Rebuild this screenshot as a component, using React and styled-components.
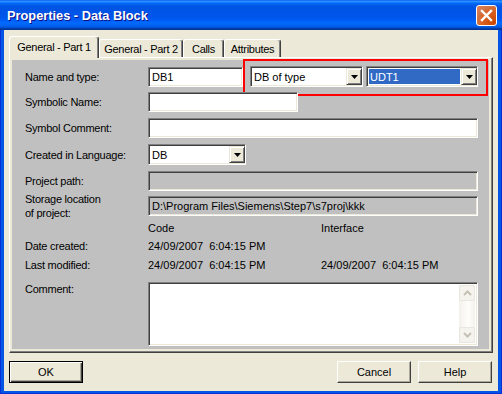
import React from "react";
import styled, { createGlobalStyle } from "styled-components";

const GlobalStyle = createGlobalStyle`
  html, body { margin: 0; padding: 0; background: #fff; }
  body { font-family: "Liberation Sans", Arial, sans-serif; font-size: 11px; color: #000; }
`;

export default function App() {
  return (
    <>
      <GlobalStyle />
      <Window>
        <TitleBar>
          <Title>Properties - Data Block</Title>
          <CloseButton>
            <svg width="21" height="21" viewBox="0 0 21 21">
              <path d="M6 6 L15 15 M15 6 L6 15" stroke="#fff" strokeWidth="2.4" strokeLinecap="square" />
            </svg>
          </CloseButton>
        </TitleBar>

        <Client>
          <TabStrip>
            <Tab $w={90} $active>General - Part 1</Tab>
            <Tab $w={84}>General - Part 2</Tab>
            <Tab $w={41}>Calls</Tab>
            <Tab $w={57}>Attributes</Tab>
          </TabStrip>

          <Panel>
            <Page>
              <Row $h={21} $mt={6}>
                <Label>Name and type:</Label>
                <Field $w={95}>DB1</Field>
                <Highlight>
                  <Combo $w={113} value="DB of type" />
                  <Combo $w={112} value="UDT1" selected />
                </Highlight>
              </Row>

              <Row $h={20} $mt={5}>
                <Label>Symbolic Name:</Label>
                <Field $w={150} />
              </Row>

              <Row $h={20} $mt={6}>
                <Label>Symbol Comment:</Label>
                <Field $w={330} />
              </Row>

              <Row $h={21} $mt={6}>
                <Label>Created in Language:</Label>
                <Combo $w={98} value="DB" />
              </Row>

              <Row $h={20} $mt={6}>
                <Label>Project path:</Label>
                <Field $w={330} $disabled />
              </Row>

              <Row $h={20} $mt={5}>
                <Label>Storage location<br />of project:</Label>
                <Field $w={330} $disabled>{"D:\\Program Files\\Siemens\\Step7\\s7proj\\kkk"}</Field>
              </Row>

              <Row $h={14} $mt={5}>
                <Label />
                <Values>
                  <span>Code</span>
                  <span>Interface</span>
                </Values>
              </Row>

              <Row $h={14} $mt={4}>
                <Label>Date created:</Label>
                <Values>
                  <span>24/09/2007  6:04:15 PM</span>
                  <span />
                </Values>
              </Row>

              <Row $h={14} $mt={5}>
                <Label>Last modified:</Label>
                <Values>
                  <span>24/09/2007  6:04:15 PM</span>
                  <span>24/09/2007  6:04:15 PM</span>
                </Values>
              </Row>

              <Row $h={64} $mt={10} $top>
                <Label>Comment:</Label>
                <Memo>
                  <MemoText />
                  <ScrollBar>
                    <ScrollButton>
                      <svg width="9" height="6" viewBox="0 0 9 6">
                        <path d="M1 5 L4.5 1.5 L8 5" stroke="#c4c1b4" strokeWidth="2" fill="none" />
                      </svg>
                    </ScrollButton>
                    <ScrollTrack />
                    <ScrollButton>
                      <svg width="9" height="6" viewBox="0 0 9 6">
                        <path d="M1 1 L4.5 4.5 L8 1" stroke="#c4c1b4" strokeWidth="2" fill="none" />
                      </svg>
                    </ScrollButton>
                  </ScrollBar>
                </Memo>
              </Row>
            </Page>
          </Panel>

          <ButtonRow>
            <Button $default>OK</Button>
            <Spacer />
            <Button>Cancel</Button>
            <Button>Help</Button>
          </ButtonRow>
        </Client>
      </Window>
    </>
  );
}

function Combo({ $w, value, selected }) {
  return (
    <ComboBox $w={$w}>
      <ComboText $selected={selected}>{value}</ComboText>
      <DropButton>
        <svg width="7" height="4" viewBox="0 0 7 4">
          <path d="M0 0 H7 L3.5 4 Z" fill="#000" />
        </svg>
      </DropButton>
    </ComboBox>
  );
}

/* ----------------------------- STYLED COMPONENTS ----------------------------- */

const Window = styled.div`
  width: 502px;
  height: 394px;
  box-sizing: border-box;
  display: flex;
  flex-direction: column;
  background: #0055e5;
  box-shadow: inset 1px 0 #0831d9, inset -1px 0 #0831d9, inset 0 -1px #0831d9;
`;

const TitleBar = styled.div`
  height: 30px;
  flex-shrink: 0;
  display: flex;
  align-items: center;
  justify-content: space-between;
  padding: 0 5px 0 7px;
  background: linear-gradient(to bottom, #0058ee 0%, #3593ff 4%, #288eff 6%, #127dff 8%, #036ffc 10%, #0262ee 14%, #0057e5 20%, #0054e3 24%, #0055eb 56%, #005bf5 66%, #026afe 76%, #0062ef 86%, #0052d6 92%, #0040ab 94%, #003092 100%);
`;

const Title = styled.div`
  color: #fff;
  font-family: "Liberation Sans", Arial, sans-serif;
  font-weight: 700;
  font-size: 12.8px;
  text-shadow: 1px 1px #0f1089;
  margin-top: 1px;
`;

const CloseButton = styled.div`
  width: 21px;
  height: 21px;
  box-sizing: border-box;
  border: 1px solid #fff;
  border-radius: 3px;
  background: radial-gradient(circle at 90% 90%, #cc4600 0%, #dc6527 55%, #cd7546 70%, #e8805a 100%);
  display: flex;
  align-items: center;
  justify-content: center;
  margin-top: 1px;

  svg { display: block; margin: -1px; }
`;

const Client = styled.div`
  flex: 1;
  margin: 0 4px 3px;
  background: #ece9d8;
  padding: 6px 5px 8px;
  display: flex;
  flex-direction: column;
`;

const TabStrip = styled.div`
  height: 21px;
  display: flex;
  align-items: flex-end;
`;

const Tab = styled.div`
  box-sizing: border-box;
  width: ${({ $w }) => $w}px;
  height: ${({ $active }) => ($active ? 22 : 18)}px;
  margin-bottom: ${({ $active }) => ($active ? -1 : 0)}px;
  position: relative;
  z-index: ${({ $active }) => ($active ? 2 : 1)};
  background: #ece9d8;
  border: 1px solid;
  border-color: #fff #404040 transparent #fff;
  border-bottom: none;
  box-shadow: inset -1px 0 #808080;
  border-radius: 3px 3px 0 0;
  display: flex;
  align-items: center;
  justify-content: center;
  padding-bottom: ${({ $active }) => ($active ? 2 : 0)}px;
  white-space: nowrap;
  letter-spacing: -0.3px;
`;

const Panel = styled.div`
  box-sizing: border-box;
  height: 296px;
  flex-shrink: 0;
  border: 1px solid;
  border-color: #fff #404040 #404040 #fff;
  box-shadow: inset -1px -1px #808080;
  padding: 2px 3px 3px 2px;
  background: #ece9d8;
  display: flex;
`;

const Page = styled.div`
  flex: 1;
  background: #c0c0c0;
  padding-left: 13px;
  display: flex;
  flex-direction: column;
`;

const Row = styled.div`
  display: flex;
  align-items: ${({ $top }) => ($top ? "flex-start" : "center")};
  height: ${({ $h }) => $h}px;
  margin-top: ${({ $mt }) => $mt}px;
  flex-shrink: 0;
`;

const Label = styled.div`
  width: 123px;
  flex-shrink: 0;
  line-height: 14px;
  letter-spacing: -0.25px;
`;

const Sunken = styled.div`
  box-sizing: border-box;
  border: 1px solid;
  border-color: #808080 #fff #fff #808080;
  box-shadow: inset 1px 1px #404040, inset -1px -1px #ece9d8;
`;

const Field = styled(Sunken)`
  width: ${({ $w }) => $w}px;
  height: 20px;
  flex-shrink: 0;
  background: ${({ $disabled }) => ($disabled ? "#c0c0c0" : "#fff")};
  padding: 0 3px;
  display: flex;
  align-items: center;
  white-space: nowrap;
`;

const Highlight = styled.div`
  box-sizing: border-box;
  align-self: flex-start;
  margin-top: -7px;
  width: 245px;
  height: 37px;
  border: 2px solid #ff0000;
  padding: 5px 0 0 5px;
  display: flex;
  gap: 3px;
  align-items: flex-start;
`;

const ComboBox = styled(Sunken)`
  width: ${({ $w }) => $w}px;
  height: 21px;
  flex-shrink: 0;
  background: #fff;
  padding: 2px;
  display: flex;
  gap: 1px;
`;

const ComboText = styled.div`
  flex: 1;
  display: flex;
  align-items: center;
  padding-left: 1px;
  background: ${({ $selected }) => ($selected ? "#316ac5" : "transparent")};
  color: ${({ $selected }) => ($selected ? "#fff" : "#000")};
`;

const DropButton = styled.div`
  box-sizing: border-box;
  width: 16px;
  height: 17px;
  margin: -2px -2px -2px 0;
  align-self: center;
  background: #ece9d8;
  border: 1px solid;
  border-color: #ece9d8 #404040 #404040 #ece9d8;
  box-shadow: inset 1px 1px #fff, inset -1px -1px #808080;
  display: flex;
  align-items: center;
  justify-content: center;

  svg { display: block; }
`;

const Values = styled.div`
  display: grid;
  grid-template-columns: 173px auto;
  white-space: pre;
  line-height: 14px;
`;

const Memo = styled(Sunken)`
  width: 330px;
  height: 64px;
  background: #fff;
  padding: 2px;
  display: flex;
`;

const MemoText = styled.div`
  flex: 1;
`;

const ScrollBar = styled.div`
  width: 16px;
  display: flex;
  flex-direction: column;
  background: linear-gradient(to right, #f3f1ec 0%, #fefefb 60%, #f3f1ec 100%);
`;

const ScrollButton = styled.div`
  box-sizing: border-box;
  width: 16px;
  height: 16px;
  border: 1px solid #e8e6de;
  border-radius: 2px;
  background: #f4f3ee;
  display: flex;
  align-items: center;
  justify-content: center;

  svg { display: block; }
`;

const ScrollTrack = styled.div`
  flex: 1;
`;

const ButtonRow = styled.div`
  display: flex;
  gap: 7px;
  margin-top: 8px;
  padding-right: 1px;
`;

const Spacer = styled.div`
  flex: 1;
`;

const Button = styled.button`
  box-sizing: border-box;
  width: 74px;
  height: 22px;
  padding: 0;
  background: #ece9d8;
  font-family: "Liberation Sans", Arial, sans-serif;
  font-size: 11px;
  color: #000;
  border: 1px solid;
  border-color: ${({ $default }) => ($default ? "#000" : "#fff #404040 #404040 #fff")};
  box-shadow: ${({ $default }) =>
    $default
      ? "inset 1px 1px #fff, inset -1px -1px #404040, inset -2px -2px #aca899"
      : "inset -1px -1px #aca899"};
`;
